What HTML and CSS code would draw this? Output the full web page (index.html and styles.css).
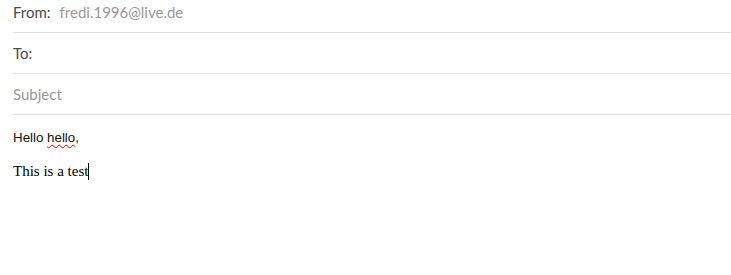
FILE: index.html
```html
<!DOCTYPE html>
<html lang="en">
<head>
    <meta charset="UTF-8">
    <title>New message</title>
    <link rel="stylesheet" href="styles.css">
</head>
<body>
    <div class="compose">
        <div class="field">
            <span class="label">From:</span>
            <span class="value">fredi.1996@live.de</span>
        </div>
        <div class="field">
            <span class="label">To:</span>
        </div>
        <div class="field">
            <span class="placeholder">Subject</span>
        </div>
        <div class="body">
            <p class="greeting">Hello <span class="misspelled">hello</span>,</p>
            <p class="line">This is a test<span class="caret"></span></p>
        </div>
    </div>
</body>
</html>
```

FILE: styles.css
```css
body {
    margin: 0;
    background: #fff;
}

.compose {
    padding-left: 13px;
}

.field {
    display: flex;
    align-items: flex-start;
    height: 32px;
    border-bottom: 1px solid #e3e3e3;
    margin-bottom: 8px;
    font-family: 'Lato', sans-serif;
    font-size: 15px;
    line-height: 36px;
}

.field span {
    margin-top: -6px;
}

.label {
    color: #4a4a4a;
    margin-right: 9px;
}

.value,
.placeholder {
    color: #999;
}

.body {
    padding-top: 7px;
}

.greeting {
    margin: 0;
    font-family: 'Liberation Sans', Arial, sans-serif;
    font-size: 13.33px;
    color: #111;
}

.misspelled {
    text-decoration: underline wavy #e00;
    text-underline-offset: 2px;
    text-decoration-thickness: 1px;
}

.line {
    margin: 18px 0 0;
    font-family: 'Liberation Serif', 'Times New Roman', serif;
    font-size: 15px;
    color: #000;
}

.caret {
    display: inline-block;
    width: 1px;
    height: 17px;
    background: #000;
    vertical-align: -4px;
}
```
